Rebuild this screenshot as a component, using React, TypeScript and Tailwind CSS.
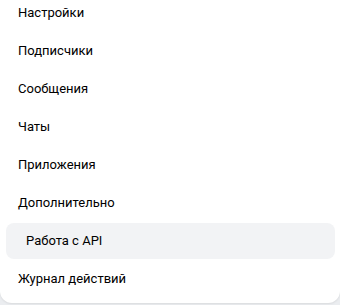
const items = [
  'Настройки',
  'Подписчики',
  'Сообщения',
  'Чаты',
  'Приложения',
  'Дополнительно',
  'Работа с API',
  'Журнал действий',
];

const active = 'Работа с API';

export default function App() {
  return (
    <div className="h-[305px] w-[340px] overflow-hidden bg-[#ebedf0] font-['Roboto',sans-serif]">
      <div className="-mt-[5px] rounded-b-xl bg-white pb-[6px] shadow-[0_1px_2px_rgba(0,0,0,0.08)]">
        <ul className="flex flex-col gap-[2px] pr-[5px] pl-[6px]">
          {items.map((label) => (
            <li
              key={label}
              className={
                label === active
                  ? 'flex h-9 items-center rounded-lg bg-[#f2f3f5] pl-5 text-[13px] text-black'
                  : 'flex h-9 items-center pl-3 text-[13px] text-black'
              }
            >
              {label}
            </li>
          ))}
        </ul>
      </div>
    </div>
  );
}
